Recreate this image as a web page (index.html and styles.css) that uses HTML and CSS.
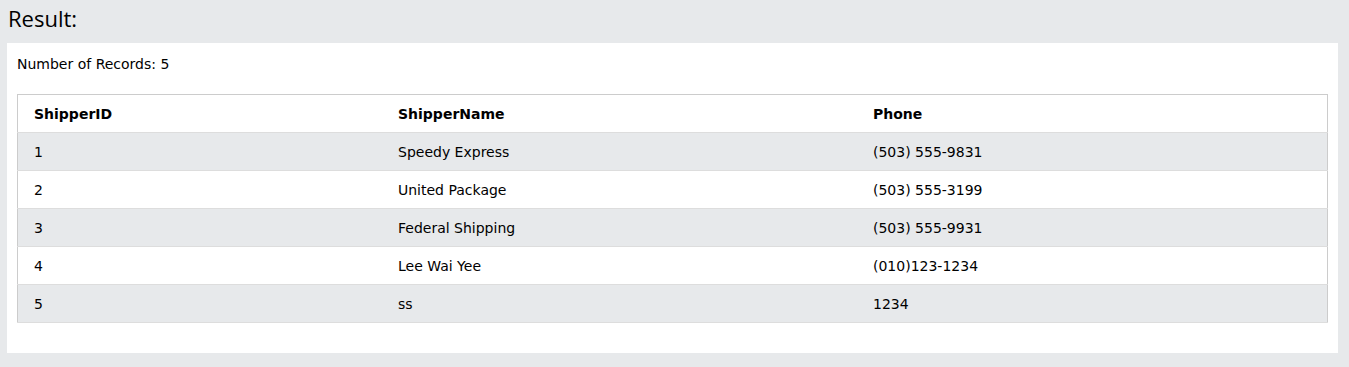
FILE: index.html
```html
<!DOCTYPE html>
<html>
<head>
<meta charset="utf-8">
<link rel="stylesheet" href="styles.css">
</head>
<body>
<div class="page">
  <h2 class="title">Result:</h2>
  <div class="panel">
    <div class="count">Number of Records: 5</div>
    <table class="grid">
      <tr><th class="c-id">ShipperID</th><th class="c-name">ShipperName</th><th class="c-phone">Phone</th></tr>
      <tr><td>1</td><td>Speedy Express</td><td>(503) 555-9831</td></tr>
      <tr><td>2</td><td>United Package</td><td>(503) 555-3199</td></tr>
      <tr><td>3</td><td>Federal Shipping</td><td>(503) 555-9931</td></tr>
      <tr><td>4</td><td>Lee Wai Yee</td><td>(010)123-1234</td></tr>
      <tr><td>5</td><td>ss</td><td>1234</td></tr>
    </table>
  </div>
</div>
</body>
</html>
```
FILE: styles.css
```css
html, body {
  margin: 0;
  padding: 0;
  background: #e7e9eb;
}
.page {
  padding: 0 11px 15px 7px;
}
.title {
  margin: 0;
  height: 43px;
  line-height: 36px;
  padding-left: 1px;
  font-family: "Open Sans", "Segoe UI", sans-serif;
  font-weight: 400;
  font-size: 22px;
  color: #000;
}
.panel {
  background: #fff;
  padding: 11px 10px 30px 10px;
  font-family: "DejaVu Sans", Verdana, sans-serif;
  font-size: 14px;
  line-height: 21px;
  color: #000;
}
.count {
  margin-bottom: 19px;
}
.grid {
  width: 100%;
  border-collapse: collapse;
  border: 1px solid #ccc;
  table-layout: fixed;
}
.grid th, .grid td {
  text-align: left;
  padding: 9px 8px 7px 8px;
  border-bottom: 1px solid #ddd;
}
.grid th:first-child, .grid td:first-child {
  padding-left: 16px;
}
.c-id { width: 348px; }
.c-name { width: 459px; }
.grid th {
  font-weight: bold;
}
.grid tr:nth-child(even) {
  background: #e7e9eb;
}
```
